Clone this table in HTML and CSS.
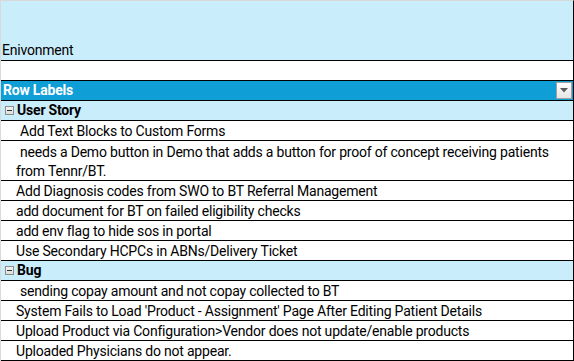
FILE: index.html
```html
<!DOCTYPE html>
<html>
<head>
<meta charset="utf-8">
<link rel="stylesheet" href="styles.css">
</head>
<body>
<div class="sheet">
  <div class="env"><span class="txt">Enivonment</span></div>
  <div class="row blank"></div>
  <div class="row header"><span class="txt">Row Labels</span><span class="dd"><svg width="8" height="5" viewBox="0 0 8 5"><path d="M0 0H8L4 4.5Z" fill="#5a5a5a"/></svg></span></div>
  <div class="row group"><span class="minus"></span><span class="txt">User Story</span></div>
  <div class="row item"><span class="txt sp">Add Text Blocks to Custom Forms</span></div>
  <div class="row item tall"><span class="txt wrap"><span class="sp">needs a Demo button in Demo that adds a button for proof of concept receiving patients</span><br>from Tennr/BT.</span></div>
  <div class="row item"><span class="txt">Add Diagnosis codes from SWO to BT Referral Management</span></div>
  <div class="row item"><span class="txt">add document for BT on failed eligibility checks</span></div>
  <div class="row item"><span class="txt">add env flag to hide sos in portal</span></div>
  <div class="row item"><span class="txt">Use Secondary HCPCs in ABNs/Delivery Ticket</span></div>
  <div class="row group"><span class="minus"></span><span class="txt">Bug</span></div>
  <div class="row item"><span class="txt sp">sending copay amount and not copay collected to BT</span></div>
  <div class="row item"><span class="txt">System Fails to Load 'Product - Assignment' Page After Editing Patient Details</span></div>
  <div class="row item"><span class="txt">Upload Product via Configuration&gt;Vendor does not update/enable products</span></div>
  <div class="row item"><span class="txt">Uploaded Physicians do not appear.</span></div>
</div>
</body>
</html>
```

FILE: styles.css
```css
html, body {
  margin: 0;
  padding: 0;
  background: #ffffff;
}
.sheet {
  width: 572px;
  border-top: 1px solid #d9d9d9;
  border-left: 1px solid #d9d9d9;
  border-right: 1px solid #000;
  font-family: Roboto, "Liberation Sans", sans-serif;
  font-size: 14px;
  letter-spacing: -0.2px;
  color: #000;
}
.env {
  height: 59px;
  background: #caedfb;
  border-bottom: 1px solid #000;
  display: flex;
  align-items: flex-end;
  padding-left: 1px;
  line-height: 19px;
}
.row {
  height: 19px;
  border-bottom: 1px solid #000;
  display: flex;
  align-items: flex-end;
  line-height: 19px;
  position: relative;
}
.blank { background: #fff; }
.header {
  background: #0f9ed5;
  color: #fff;
  font-weight: bold;
  padding-left: 2px;
}
.group {
  background: #caedfb;
  font-weight: bold;
  padding-left: 4px;
}
.item {
  padding-left: 15px;
  line-height: 17px;
}
.tall { height: 39px; }
.wrap { line-height: 19px; margin-bottom: -1px; }
.txt { white-space: nowrap; }
.sp { padding-left: 4px; }
.minus {
  width: 7px;
  height: 7px;
  border: 1px solid #8e8e8e;
  background: linear-gradient(#f4f4f4, #dcdcdc);
  margin-right: 3px;
  margin-bottom: 5px;
  position: relative;
  flex: none;
}
.minus::after {
  content: "";
  position: absolute;
  left: 1px;
  top: 3px;
  width: 5px;
  height: 1px;
  background: #333;
}
.dd {
  position: absolute;
  right: 1px;
  top: 1px;
  width: 14px;
  height: 15px;
  border: 1px solid #a0a0a0;
  background: linear-gradient(#ffffff, #e6e6e6);
  display: flex;
  align-items: center;
  justify-content: center;
}
```
